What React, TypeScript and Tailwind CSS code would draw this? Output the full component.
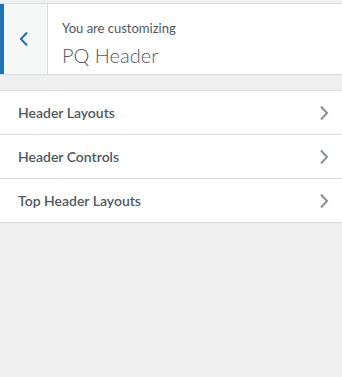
const SECTIONS = ['Header Layouts', 'Header Controls', 'Top Header Layouts']

function Chevron({ dir, className }: { dir: 'left' | 'right'; className?: string }) {
  return (
    <svg width="10" height="16" viewBox="0 0 10 16" fill="none" className={className}>
      <path
        d={dir === 'left' ? 'M8 1.5 2 8l6 6.5' : 'M2 1.5 8 8l-6 6.5'}
        stroke="currentColor"
        strokeWidth={2}
      />
    </svg>
  )
}

export default function App() {
  return (
    <div
      className="w-[342px] h-[377px] bg-[#f0f0f1] text-[#50575e] overflow-hidden"
      style={{ fontFamily: 'Lato, "Noto Sans", sans-serif' }}
    >
      {/* top strip */}
      <div className="h-[4px] border-b border-[#dcdcde]" />

      {/* panel header */}
      <div className="flex h-[71px] bg-white border-b border-[#dcdcde]">
        <button className="w-[48px] shrink-0 flex items-center justify-center bg-[#f6f7f7] border-l-4 border-[#2271b1] border-r border-r-[#dcdcde] text-[#2271b1]">
          <Chevron dir="left" className="-ml-[4px]" />
        </button>
        <div className="flex flex-col pl-[14px] pt-[15px]">
          <span className="text-[13px] leading-[18px]">You are customizing</span>
          <span className="text-[20px] leading-[28px] font-light mt-[4px]">PQ Header</span>
        </div>
      </div>

      {/* sections */}
      <ul className="mt-[15px] bg-white border-t border-[#dcdcde]">
        {SECTIONS.map(label => (
          <li
            key={label}
            className="flex items-center justify-between h-[44px] pl-[18px] pr-[13px] border-b border-[#dcdcde] text-[14px] font-semibold text-[#50575e]"
          >
            <span>{label}</span>
            <Chevron dir="right" className="text-[#8c8f94]" />
          </li>
        ))}
      </ul>
    </div>
  )
}
